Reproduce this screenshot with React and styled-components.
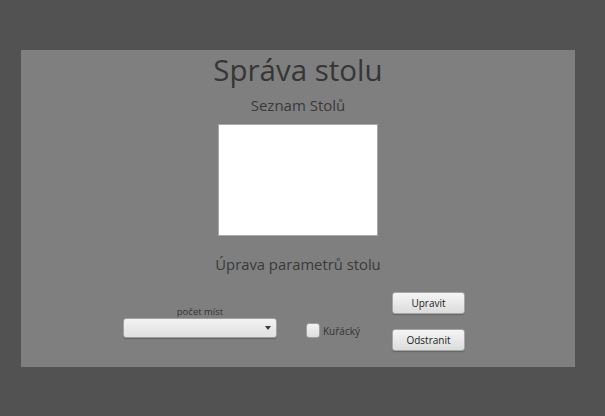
import React from "react";
import styled, { createGlobalStyle } from "styled-components";

const GlobalStyle = createGlobalStyle`
	html, body {
		margin: 0;
		padding: 0;
		background: #525252;
		font-family: "Open Sans", "Noto Sans", sans-serif;
	}
`;

function App() {
	const [seats, setSeats] = React.useState("");
	const [smoking, setSmoking] = React.useState(false);

	return (
		<>
			<GlobalStyle />
			<Page>
				<Panel>
					<Title>Správa stolu</Title>
					<Subtitle>Seznam Stolů</Subtitle>
					<TableList />
					<SectionTitle>Úprava parametrů stolu</SectionTitle>
					<Controls>
						<Field>
							<FieldLabel>počet míst</FieldLabel>
							<ComboWrap>
								<Combo value={seats} onChange={(e) => setSeats(e.target.value)}>
									<option value=""></option>
									<option value="2">2</option>
									<option value="4">4</option>
									<option value="6">6</option>
								</Combo>
							</ComboWrap>
						</Field>
						<CheckLabel>
							<Check
								type="checkbox"
								checked={smoking}
								onChange={() => setSmoking(!smoking)}
							/>
							Kuřácký
						</CheckLabel>
						<Buttons>
							<Button>Upravit</Button>
							<Button>Odstranit</Button>
						</Buttons>
					</Controls>
				</Panel>
			</Page>
		</>
	);
}

const Page = styled.div`
	height: 416px;
	box-sizing: border-box;
	padding: 50px 30px 49px 21px;
	display: flex;
`;

const Panel = styled.div`
	flex: 1;
	background: #7f7f7f;
	display: flex;
	flex-direction: column;
	align-items: center;
	color: #333;
`;

const Title = styled.h1`
	margin: 0;
	font-size: 29.5px;
	font-weight: 400;
	line-height: 40px;
	color: #363636;
`;

const Subtitle = styled.h2`
	margin: 5px 0 0;
	font-size: 15px;
	font-weight: 400;
	line-height: 20px;
	color: #3a3a3a;
`;

const TableList = styled.div`
	margin-top: 10px;
	width: 158px;
	height: 110px;
	background: #fff;
	box-shadow: 0 0 0 1px #a8a8a8;
`;

const SectionTitle = styled.h3`
	margin: 18px 0 0;
	font-size: 14.8px;
	font-weight: 400;
	line-height: 22px;
	color: #3a3a3a;
`;

const Controls = styled.div`
	align-self: stretch;
	margin-top: 17px;
	padding: 0 110px 0 102px;
	display: flex;
	align-items: flex-start;
`;

const Field = styled.div`
	width: 154px;
	margin-top: 13px;
	display: flex;
	flex-direction: column;
	align-items: center;
`;

const FieldLabel = styled.span`
	font-size: 9.5px;
	line-height: 13px;
	color: #333;
`;

const ComboWrap = styled.div`
	position: relative;
	display: flex;

	&::after {
		content: "";
		position: absolute;
		right: 6px;
		top: 8px;
		border-left: 3.5px solid transparent;
		border-right: 3.5px solid transparent;
		border-top: 4px solid #3a3a3a;
		pointer-events: none;
	}
`;

const Combo = styled.select`
	appearance: none;
	width: 154px;
	height: 20px;
	box-sizing: border-box;
	border: 1px solid #a0a0a0;
	border-radius: 3px;
	background: linear-gradient(#f2f2f2, #e0e0e0);
	box-shadow: 0 1px 1px rgba(0, 0, 0, 0.25);
	font-family: inherit;
	font-size: 11px;
	outline: none;
`;

const CheckLabel = styled.label`
	margin: 31px 0 0 29px;
	display: flex;
	align-items: center;
	gap: 3px;
	font-size: 10px;
	color: #333;
	cursor: pointer;
`;

const Check = styled.input`
	appearance: none;
	margin: 0;
	width: 14px;
	height: 15px;
	box-sizing: border-box;
	border: 1px solid #a0a0a0;
	border-radius: 3px;
	background: linear-gradient(#f2f2f2, #dedede);
	cursor: pointer;
`;

const Buttons = styled.div`
	margin-left: auto;
	display: flex;
	flex-direction: column;
	gap: 15px;
`;

const Button = styled.button`
	width: 73px;
	height: 22px;
	box-sizing: border-box;
	border: 1px solid #a5a5a5;
	border-radius: 3px;
	background: linear-gradient(#f5f5f5, #dcdcdc);
	box-shadow: 0 1px 1px rgba(0, 0, 0, 0.2);
	font-family: inherit;
	font-size: 10px;
	color: #222;
	padding: 0;
	cursor: pointer;
`;

export default App;
